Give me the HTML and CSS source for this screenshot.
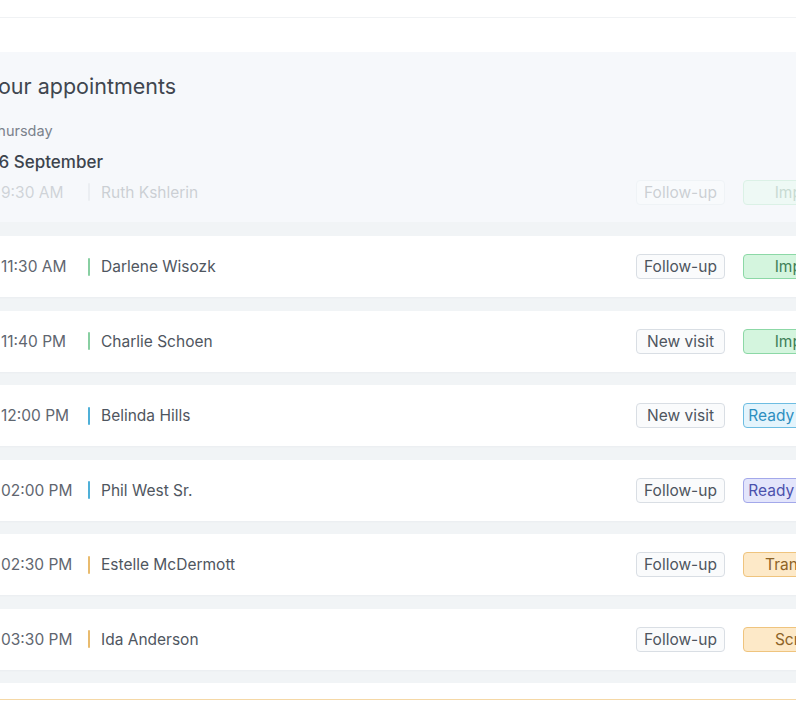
FILE: index.html
```html
<!DOCTYPE html>
<html lang="en">
<head>
<meta charset="utf-8">
<title>Your appointments</title>
<link rel="stylesheet" href="styles.css">
</head>
<body>
<div class="topbar"></div>
<main class="panel">
  <header class="head">
    <h1 class="title">Your appointments</h1>
    <div class="weekday">Thursday</div>
    <div class="date">26 September</div>
  </header>
  <ul class="list">
    <li class="card card-under">
      <span class="time">9:30 AM</span><span class="bar bar-gray"></span><span class="name">Ruth Kshlerin</span>
      <span class="type">Follow-up</span><span class="status st-green">Important</span>
    </li>
    <li class="card">
      <span class="time">11:30 AM</span><span class="bar bar-green"></span><span class="name">Darlene Wisozk</span>
      <span class="type">Follow-up</span><span class="status st-green">Important</span>
    </li>
    <li class="card">
      <span class="time">11:40 PM</span><span class="bar bar-green"></span><span class="name">Charlie Schoen</span>
      <span class="type">New visit</span><span class="status st-green">Important</span>
    </li>
    <li class="card">
      <span class="time">12:00 PM</span><span class="bar bar-blue"></span><span class="name">Belinda Hills</span>
      <span class="type">New visit</span><span class="status st-blue">Ready for review</span>
    </li>
    <li class="card">
      <span class="time">02:00 PM</span><span class="bar bar-blue"></span><span class="name">Phil West Sr.</span>
      <span class="type">Follow-up</span><span class="status st-purple">Ready for review</span>
    </li>
    <li class="card">
      <span class="time">02:30 PM</span><span class="bar bar-orange"></span><span class="name">Estelle McDermott</span>
      <span class="type">Follow-up</span><span class="status st-orange">Transferring</span>
    </li>
    <li class="card">
      <span class="time">03:30 PM</span><span class="bar bar-orange"></span><span class="name">Ida Anderson</span>
      <span class="type">Follow-up</span><span class="status st-orange">Screened</span>
    </li>
    <li class="card card-next">
      <span class="next-line"></span>
    </li>
  </ul>
</main>
</body>
</html>
```
FILE: styles.css
```css
html, body {
  margin: 0;
  padding: 0;
  background: #ffffff;
  overflow: hidden;
  height: 701px;
}

body {
  font-family: Inter, "Noto Sans", "Liberation Sans", sans-serif;
  color: #4b535c;
}

.topbar {
  height: 17px;
  border-bottom: 1px solid #f0f2f4;
}

.panel {
  position: relative;
  margin-top: 34px;
  margin-left: -40px;
  width: 900px;
  background: #f1f4f6;
  height: 700px;
}

.head {
  position: absolute;
  top: 0;
  left: 0;
  right: 0;
  height: 170px;
  z-index: 2;
  box-sizing: border-box;
  padding: 21px 0 0 28px;
  background: rgba(247, 250, 252, 0.74);
}

.title {
  margin: 0;
  text-indent: -3px;
  font-size: 21.5px;
  font-weight: 400;
  line-height: 26px;
  color: #3f464f;
}

.weekday {
  margin-top: 23px;
  font-size: 14.5px;
  line-height: 18px;
  color: #7b828c;
}

.date {
  margin-top: 11px;
  font-size: 17px;
  font-weight: 500;
  line-height: 22px;
  color: #3d444d;
}

.list {
  list-style: none;
  margin: 0;
  padding: 109.5px 0 0 0;
  display: flex;
  flex-direction: column;
  gap: 13.5px;
}

.card {
  display: flex;
  align-items: center;
  height: 61px;
  box-sizing: border-box;
  padding-left: 41px;
  background: #ffffff;
  box-shadow: 0 1px 2px rgba(30, 40, 60, 0.03);
  font-size: 15.5px;
}

.card-under {
  background: #f1f4f6;
  box-shadow: none;
}

.time {
  width: 87px;
  flex: none;
  color: #5f6670;
}

.bar {
  width: 2px;
  height: 18px;
  border-radius: 1px;
  margin-right: 11px;
  flex: none;
}

.bar-gray { background: #c9ced4; }
.bar-green { background: #88cfa2; }
.bar-blue { background: #4fb0d8; }
.bar-orange { background: #e9bb6e; }

.name {
  width: 535px;
  flex: none;
  color: #4f5660;
}

.type {
  flex: none;
  box-sizing: border-box;
  width: 89px;
  height: 25px;
  line-height: 23px;
  text-align: center;
  border: 1px solid #d9dee4;
  border-radius: 4px;
  background: #fafbfc;
  color: #4e555e;
}

.status {
  flex: none;
  box-sizing: border-box;
  margin-left: 18px;
  width: 134px;
  height: 25px;
  line-height: 23px;
  text-align: center;
  border: 1px solid;
  border-radius: 4px;
  white-space: nowrap;
}

.st-green { background: #d4f5de; border-color: #8cd8a6; color: #3f7f58; }
.st-blue { background: #e4f4fc; border-color: #6dbde2; color: #2d8fc0; }
.st-purple { background: #e3e5fb; border-color: #a3a8ea; color: #4b51ad; }
.st-orange { background: #fde9c8; border-color: #efc47e; color: #8d6327; }

.card-next {
  align-items: flex-start;
}

.next-line {
  display: block;
  margin-top: 16px;
  margin-left: -41px;
  width: 100%;
  height: 1px;
  background: #f5d8a6;
}
```
